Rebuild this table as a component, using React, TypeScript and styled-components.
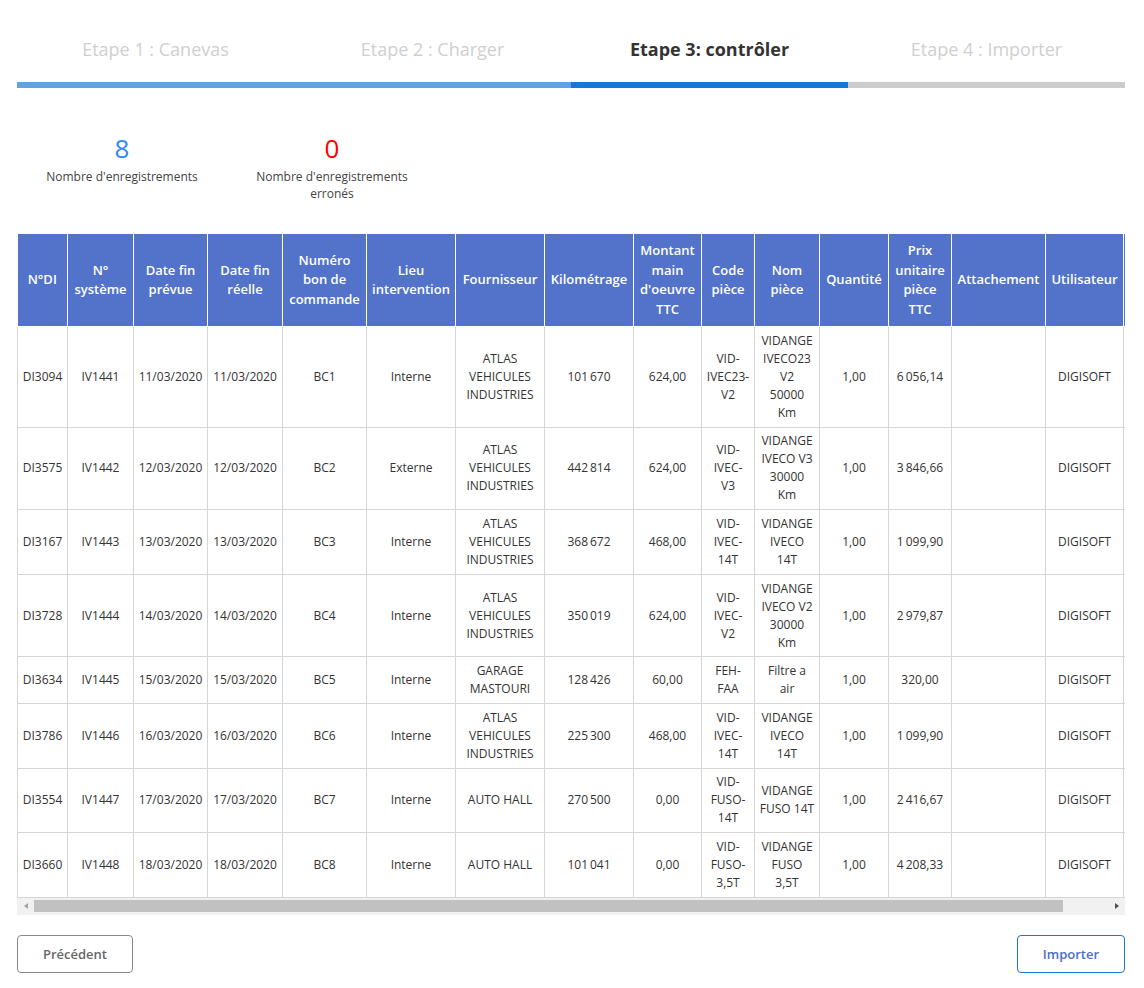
import React from "react";
import styled, { createGlobalStyle } from "styled-components";

const GlobalStyle = createGlobalStyle`
  html, body { margin: 0; padding: 0; background: #fff; }
  body { font-family: "Open Sans", "Noto Sans", Arial, sans-serif; color: #333; }
`;

const Page = styled.div`
  padding: 0 19px 0 17px;
`;

const Stepper = styled.div`
  padding-top: 37px;
  display: grid;
  grid-template-columns: repeat(4, 1fr);
`;

const Step = styled.div`
  display: flex;
  flex-direction: column;
  align-items: center;
  gap: 21px;
`;

const StepLabel = styled.div<{ $active?: boolean }>`
  font-size: 18px;
  line-height: 24px;
  font-weight: ${(p) => (p.$active ? 700 : 400)};
  color: ${(p) => (p.$active ? "#333" : "#cfcfcf")};
`;

const StepBar = styled.div<{ $color: string }>`
  align-self: stretch;
  height: 6px;
  background: ${(p) => p.$color};
`;

const Counters = styled.div`
  display: flex;
  margin-top: 45px;
`;

const Counter = styled.div`
  width: 210px;
  display: flex;
  flex-direction: column;
  align-items: center;
  text-align: center;
  gap: 5px;
`;

const CounterValue = styled.div<{ $color: string }>`
  font-size: 26px;
  line-height: 30px;
  color: ${(p) => p.$color};
`;

const CounterLabel = styled.div`
  font-size: 12px;
  line-height: 17px;
  color: #444;
  max-width: 160px;
`;

const TableBox = styled.div`
  margin-top: 32px;
`;

const TableViewport = styled.div`
  overflow: hidden;
`;

const Table = styled.table`
  border-collapse: collapse;
  table-layout: fixed;
  width: 1158px;
  font-size: 12px;
`;

const HeadCell = styled.th`
  background: #5273c9;
  color: #fff;
  font-weight: 600;
  font-size: 13px;
  line-height: 19.5px;
  padding: 7px 2px;
  border: 1px solid #fff;
  border-top: none;
  text-align: center;
  vertical-align: middle;
  white-space: pre;
  &:first-child { border-left: none; }
`;

const Cell = styled.td`
  padding: 4.8px 2px;
  line-height: 18px;
  border: 1px solid #d6d6d6;
  text-align: center;
  vertical-align: middle;
  white-space: pre;
  color: #333;
`;

const ScrollBar = styled.div`
  display: flex;
  height: 17px;
  background: #f1f1f1;
`;

const ScrollButton = styled.div<{ $dir: "left" | "right"; $enabled?: boolean }>`
  width: 17px;
  display: flex;
  align-items: center;
  justify-content: center;
  &::before {
    content: "";
    width: 0;
    height: 0;
    border-top: 3.5px solid transparent;
    border-bottom: 3.5px solid transparent;
    ${(p) =>
      p.$dir === "left"
        ? `border-right: 4px solid ${p.$enabled ? "#505050" : "#a3a3a3"};`
        : `border-left: 4px solid ${p.$enabled ? "#505050" : "#a3a3a3"};`}
  }
`;

const ScrollTrack = styled.div`
  flex: 1;
  padding: 2px 0 3px;
`;

const ScrollThumb = styled.div`
  height: 12px;
  background: #c1c1c1;
`;

const Footer = styled.div`
  display: flex;
  justify-content: space-between;
  margin-top: 20px;
  padding-bottom: 15px;
`;

const Button = styled.button<{ $primary?: boolean }>`
  height: 38px;
  width: ${(p) => (p.$primary ? "108px" : "116px")};
  background: #fff;
  border: 1px solid ${(p) => (p.$primary ? "#1976d2" : "#8a8a8a")};
  border-radius: 4px;
  font-family: "Open Sans", Arial, sans-serif;
  font-size: 13px;
  font-weight: 600;
  color: ${(p) => (p.$primary ? "#4a6dcc" : "#666")};
  cursor: pointer;
`;

const steps = [
  { label: "Etape 1 : Canevas", color: "#5ba4e6" },
  { label: "Etape 2 : Charger", color: "#5ba4e6" },
  { label: "Etape 3: contrôler", color: "#1976d2", active: true },
  { label: "Etape 4 : Importer", color: "#cccccc" },
];

const columns: { title: string; width: number }[] = [
  { title: "N°DI", width: 50 },
  { title: "N°\nsystème", width: 66 },
  { title: "Date fin\nprévue", width: 74 },
  { title: "Date fin\nréelle", width: 75 },
  { title: "Numéro\nbon de\ncommande", width: 84 },
  { title: "Lieu\nintervention", width: 89 },
  { title: "Fournisseur", width: 89 },
  { title: "Kilométrage", width: 89 },
  { title: "Montant\nmain\nd'oeuvre\nTTC", width: 68 },
  { title: "Code\npièce", width: 53 },
  { title: "Nom\npièce", width: 65 },
  { title: "Quantité", width: 69 },
  { title: "Prix\nunitaire\npièce\nTTC", width: 63 },
  { title: "Attachement", width: 94 },
  { title: "Utilisateur", width: 78 },
  { title: "", width: 52 },
];

const N = "\u2009";
const ATLAS = "ATLAS\nVEHICULES\nINDUSTRIES";

const rows: string[][] = [
  ["DI3094", "IV1441", "11/03/2020", "11/03/2020", "BC1", "Interne", ATLAS, `101${N}670`, "624,00", "VID-\nIVEC23-\nV2", "VIDANGE\nIVECO23\nV2\n50000\nKm", "1,00", `6${N}056,14`, "", "DIGISOFT", ""],
  ["DI3575", "IV1442", "12/03/2020", "12/03/2020", "BC2", "Externe", ATLAS, `442${N}814`, "624,00", "VID-\nIVEC-\nV3", "VIDANGE\nIVECO V3\n30000\nKm", "1,00", `3${N}846,66`, "", "DIGISOFT", ""],
  ["DI3167", "IV1443", "13/03/2020", "13/03/2020", "BC3", "Interne", ATLAS, `368${N}672`, "468,00", "VID-\nIVEC-\n14T", "VIDANGE\nIVECO\n14T", "1,00", `1${N}099,90`, "", "DIGISOFT", ""],
  ["DI3728", "IV1444", "14/03/2020", "14/03/2020", "BC4", "Interne", ATLAS, `350${N}019`, "624,00", "VID-\nIVEC-\nV2", "VIDANGE\nIVECO V2\n30000\nKm", "1,00", `2${N}979,87`, "", "DIGISOFT", ""],
  ["DI3634", "IV1445", "15/03/2020", "15/03/2020", "BC5", "Interne", "GARAGE\nMASTOURI", `128${N}426`, "60,00", "FEH-\nFAA", "Filtre a\nair", "1,00", "320,00", "", "DIGISOFT", ""],
  ["DI3786", "IV1446", "16/03/2020", "16/03/2020", "BC6", "Interne", ATLAS, `225${N}300`, "468,00", "VID-\nIVEC-\n14T", "VIDANGE\nIVECO\n14T", "1,00", `1${N}099,90`, "", "DIGISOFT", ""],
  ["DI3554", "IV1447", "17/03/2020", "17/03/2020", "BC7", "Interne", "AUTO HALL", `270${N}500`, "0,00", "VID-\nFUSO-\n14T", "VIDANGE\nFUSO 14T", "1,00", `2${N}416,67`, "", "DIGISOFT", ""],
  ["DI3660", "IV1448", "18/03/2020", "18/03/2020", "BC8", "Interne", "AUTO HALL", `101${N}041`, "0,00", "VID-\nFUSO-\n3,5T", "VIDANGE\nFUSO\n3,5T", "1,00", `4${N}208,33`, "", "DIGISOFT", ""],
];

const thumbRatio = 1029 / 1074;

export default function App() {
  return (
    <Page>
      <GlobalStyle />
      <Stepper>
        {steps.map((s) => (
          <Step key={s.label}>
            <StepLabel $active={s.active}>{s.label}</StepLabel>
            <StepBar $color={s.color} />
          </Step>
        ))}
      </Stepper>

      <Counters>
        <Counter>
          <CounterValue $color="#2f86f6">8</CounterValue>
          <CounterLabel>Nombre d'enregistrements</CounterLabel>
        </Counter>
        <Counter>
          <CounterValue $color="#ff0000">0</CounterValue>
          <CounterLabel>Nombre d'enregistrements erronés</CounterLabel>
        </Counter>
      </Counters>

      <TableBox>
        <TableViewport>
          <Table>
            <colgroup>
              {columns.map((c, i) => (
                <col key={i} style={{ width: c.width }} />
              ))}
            </colgroup>
            <thead>
              <tr>
                {columns.map((c, i) => (
                  <HeadCell key={i}>{c.title}</HeadCell>
                ))}
              </tr>
            </thead>
            <tbody>
              {rows.map((r, ri) => (
                <tr key={ri}>
                  {r.map((v, ci) => (
                    <Cell key={ci}>{v}</Cell>
                  ))}
                </tr>
              ))}
            </tbody>
          </Table>
        </TableViewport>
        <ScrollBar>
          <ScrollButton $dir="left" />
          <ScrollTrack>
            <ScrollThumb style={{ width: `${thumbRatio * 100}%` }} />
          </ScrollTrack>
          <ScrollButton $dir="right" $enabled />
        </ScrollBar>
      </TableBox>

      <Footer>
        <Button>Précédent</Button>
        <Button $primary>Importer</Button>
      </Footer>
    </Page>
  );
}
